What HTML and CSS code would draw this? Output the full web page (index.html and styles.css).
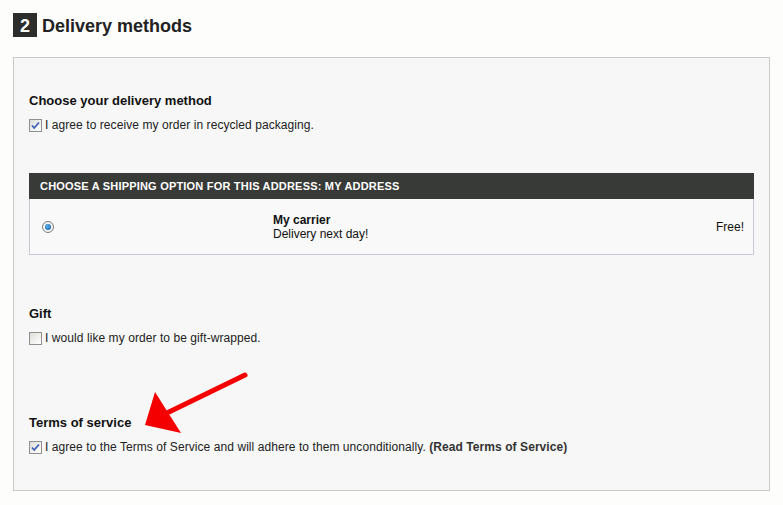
FILE: index.html
```html
<!DOCTYPE html>
<html>
<head>
<meta charset="utf-8">
<link rel="stylesheet" href="styles.css">
</head>
<body>
<div class="page">
  <h1 class="title"><span class="step">2</span><span class="title-text">Delivery methods</span></h1>
  <div class="panel">
    <section class="block first">
      <h3 class="block-title">Choose your delivery method</h3>
      <label class="check-row">
        <span class="cb checked"><svg viewBox="0 0 13 13" width="13" height="13"><path d="M3 6.5 L5.2 9 L10 3.5" fill="none" stroke="#3f5fb4" stroke-width="1.8"/></svg></span>
        <span>I agree to receive my order in recycled packaging.</span>
      </label>
    </section>

    <div class="ship">
      <div class="ship-head">CHOOSE A SHIPPING OPTION FOR THIS ADDRESS: MY ADDRESS</div>
      <div class="ship-body">
        <span class="radio-col"><span class="radio"><span class="dot"></span></span></span>
        <span class="carrier"><b>My carrier</b><span>Delivery next day!</span></span>
        <span class="price">Free!</span>
      </div>
    </div>

    <section class="block gift">
      <h3 class="block-title">Gift</h3>
      <label class="check-row">
        <span class="cb"></span>
        <span>I would like my order to be gift-wrapped.</span>
      </label>
    </section>

    <section class="block terms">
      <h3 class="block-title">Terms of service</h3>
      <label class="check-row">
        <span class="cb checked"><svg viewBox="0 0 13 13" width="13" height="13"><path d="M3 6.5 L5.2 9 L10 3.5" fill="none" stroke="#3f5fb4" stroke-width="1.8"/></svg></span>
        <span>I agree to the Terms of Service and will adhere to them unconditionally. <a class="tos-link">(Read Terms of Service)</a></span>
      </label>
    </section>

    <svg class="arrow" width="120" height="70" viewBox="0 0 120 70">
      <path d="M106 5 L30 42" stroke="#f40000" stroke-width="5" stroke-linecap="round"/>
      <polygon points="16,22 6,55 42,63" fill="#f40000"/>
    </svg>
  </div>
</div>
</body>
</html>
```

FILE: styles.css
```css
* { box-sizing: border-box; }
html, body { margin: 0; padding: 0; }
body {
  background: #fdfdfc;
  font-family: "Liberation Sans", Arial, sans-serif;
  font-size: 12px;
  color: #222;
}
.page {
  padding: 13px 0 0 13px;
  width: 770px;
}
.title {
  display: flex;
  align-items: flex-start;
  gap: 5px;
  margin: 0;
  height: 24px;
  font-size: 18px;
  font-weight: bold;
  color: #222;
}
.step {
  display: block;
  width: 24px;
  height: 24px;
  padding-top: 3px;
  line-height: 21px;
  text-align: center;
  background: #2d2d2b;
  color: #fff;
}
.title-text { padding-top: 3px; line-height: 21px; }
.panel {
  position: relative;
  margin-top: 20px;
  width: 757px;
  height: 434px;
  background: #f6f7f6;
  border: 1px solid #cacaca;
  padding: 35px 15px 0 15px;
}
.block-title {
  margin: 0;
  font-size: 13px;
  font-weight: bold;
  line-height: 16px;
  color: #111;
}
.check-row {
  display: flex;
  align-items: center;
  gap: 3px;
  margin-top: 9px;
  line-height: 14px;
  color: #222;
  letter-spacing: 0.07px;
}
.cb {
  width: 13px;
  height: 13px;
  flex: none;
  border: 1px solid #8f8f8f;
  background: linear-gradient(135deg, #dcdcd7 0%, #f6f6f4 70%, #fff 100%);
  position: relative;
}
.cb svg { position: absolute; left: -1px; top: -1px; }
.ship {
  margin-top: 41px;
  width: 725px;
  border: 1px solid #c6cbd3;
  border-top: none;
}
.ship-head {
  height: 26px;
  background: #383a37;
  color: #fff;
  font-weight: bold;
  font-size: 11px;
  letter-spacing: 0.2px;
  line-height: 26px;
  padding-left: 11px;
  margin: 0 -1px;
}
.ship-body {
  display: flex;
  align-items: center;
  height: 55px;
  background: #f8f9f8;
  padding: 0 9px 0 12px;
}
.radio-col { width: 231px; display: flex; }
.radio {
  width: 12px;
  height: 12px;
  border-radius: 50%;
  border: 1px solid #7c7c7c;
  background: #f4f4f2;
  display: flex;
  align-items: center;
  justify-content: center;
}
.dot {
  width: 6px;
  height: 6px;
  border-radius: 50%;
  background: radial-gradient(circle at 40% 40%, #55b4f0, #0e4f9a);
}
.carrier {
  display: flex;
  flex-direction: column;
  flex: 1;
  line-height: 14px;
  color: #111;
}
.carrier b { font-size: 12px; }
.price { color: #111; }
.gift { margin-top: 51px; }
.terms { margin-top: 70px; }
.tos-link { font-weight: bold; color: #333; }
.arrow {
  position: absolute;
  left: 125px;
  top: 312px;
}
```
